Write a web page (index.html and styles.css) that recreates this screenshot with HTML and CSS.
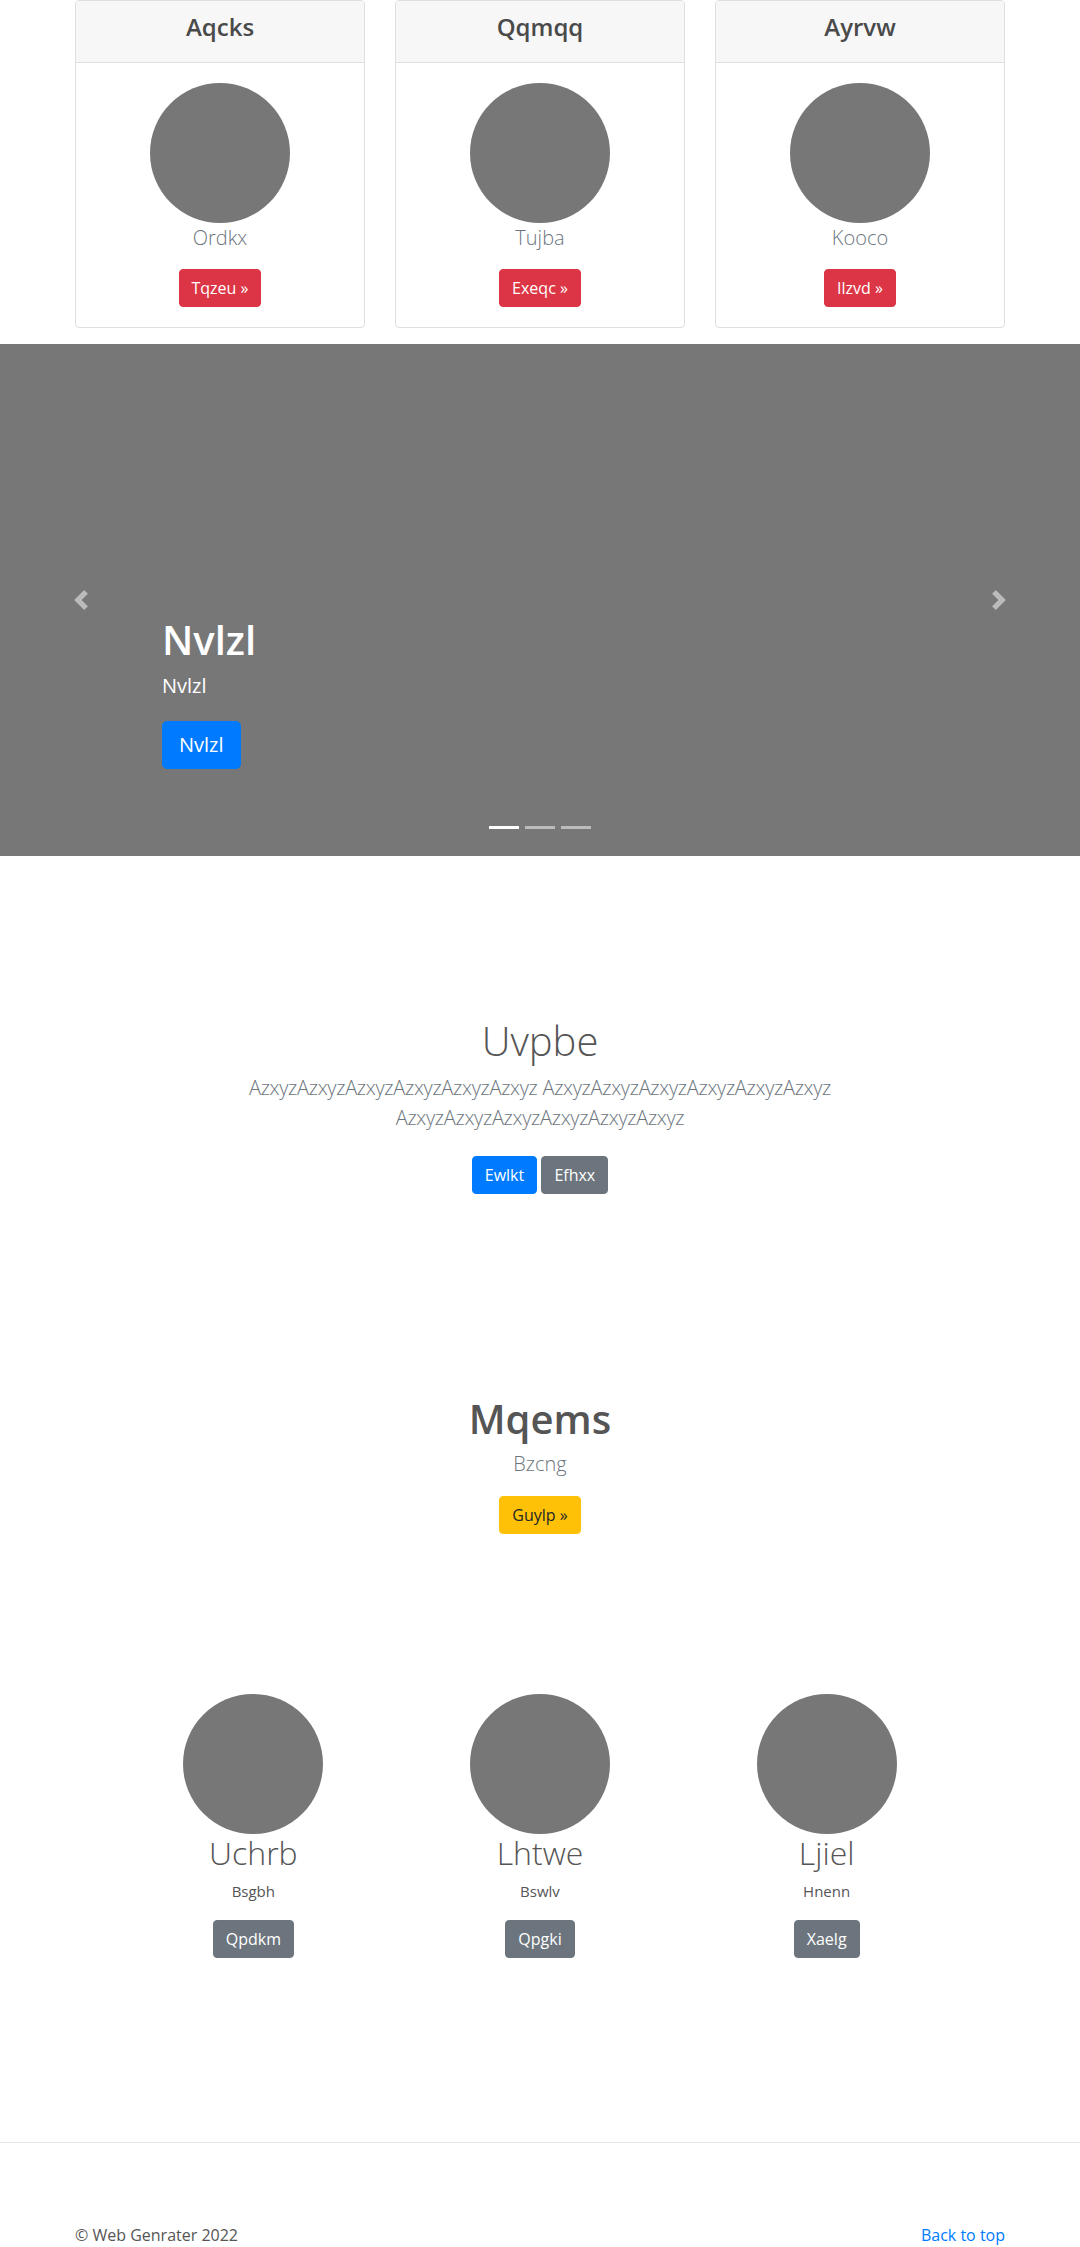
FILE: index.html
```html
<!DOCTYPE html>
<html lang="en">
<head>
<meta charset="utf-8">
<title>Web Genrater</title>
<link rel="stylesheet" href="styles.css">
</head>
<body>
<div class="cards">
  <div class="card">
    <div class="card-header"><h4>Aqcks</h4></div>
    <div class="card-body">
      <div class="circle"></div>
      <p class="card-text">Ordkx</p>
      <a class="btn btn-danger" href="#">Tqzeu &raquo;</a>
    </div>
  </div>
  <div class="card">
    <div class="card-header"><h4>Qqmqq</h4></div>
    <div class="card-body">
      <div class="circle"></div>
      <p class="card-text">Tujba</p>
      <a class="btn btn-danger" href="#">Exeqc &raquo;</a>
    </div>
  </div>
  <div class="card">
    <div class="card-header"><h4>Ayrvw</h4></div>
    <div class="card-body">
      <div class="circle"></div>
      <p class="card-text">Kooco</p>
      <a class="btn btn-danger" href="#">Ilzvd &raquo;</a>
    </div>
  </div>
</div>

<div class="carousel">
  <div class="caption">
    <h1>Nvlzl</h1>
    <p>Nvlzl</p>
    <p class="caption-btn"><a class="btn btn-lg btn-primary" href="#">Nvlzl</a></p>
  </div>
  <a class="control control-prev" href="#" aria-label="Previous">
    <svg width="20" height="20" viewBox="0 0 8 8"><path d="M5.25 0l-4 4 4 4 1.5-1.5-2.5-2.5 2.5-2.5-1.5-1.5z"/></svg>
  </a>
  <a class="control control-next" href="#" aria-label="Next">
    <svg width="20" height="20" viewBox="0 0 8 8"><path d="M2.75 0l-1.5 1.5 2.5 2.5-2.5 2.5 1.5 1.5 4-4-4-4z"/></svg>
  </a>
  <ol class="indicators">
    <li class="active"></li>
    <li></li>
    <li></li>
  </ol>
</div>

<section class="hero">
  <h1 class="hero-title">Uvpbe</h1>
  <p class="lead">AzxyzAzxyzAzxyzAzxyzAzxyzAzxyz AzxyzAzxyzAzxyzAzxyzAzxyzAzxyz AzxyzAzxyzAzxyzAzxyzAzxyzAzxyz</p>
  <p class="hero-btns"><a class="btn btn-primary" href="#">Ewlkt</a> <a class="btn btn-secondary" href="#">Efhxx</a></p>
</section>

<section class="feature">
  <h1 class="feature-title">Mqems</h1>
  <p class="feature-sub">Bzcng</p>
  <a class="btn btn-warning" href="#">Guylp &raquo;</a>
</section>

<section class="marketing">
  <div class="col">
    <div class="circle"></div>
    <h2>Uchrb</h2>
    <p>Bsgbh</p>
    <a class="btn btn-secondary" href="#">Qpdkm</a>
  </div>
  <div class="col">
    <div class="circle"></div>
    <h2>Lhtwe</h2>
    <p>Bswlv</p>
    <a class="btn btn-secondary" href="#">Qpgki</a>
  </div>
  <div class="col">
    <div class="circle"></div>
    <h2>Ljiel</h2>
    <p>Hnenn</p>
    <a class="btn btn-secondary" href="#">Xaelg</a>
  </div>
</section>

<footer class="footer">
  <div class="footer-inner">
    <p>&copy; Web Genrater 2022</p>
    <p><a href="#">Back to top</a></p>
  </div>
</footer>
</body>
</html>
```

FILE: styles.css
```css
* { box-sizing: border-box; }

html, body {
  margin: 0;
  padding: 0;
}

body {
  font-family: "Open Sans", "Noto Sans", "Liberation Sans", sans-serif;
  font-size: 16px;
  line-height: 1.5;
  color: #555;
  background: #fff;
}

a { color: #007bff; text-decoration: none; }

p { margin: 0; }
h1, h2, h4 { margin: 0; }

.btn {
  display: inline-block;
  font-size: 16px;
  line-height: 24px;
  padding: 6px 12px;
  border: 1px solid transparent;
  border-radius: 4px;
  color: #fff;
  text-align: center;
  vertical-align: middle;
}
.btn-lg {
  font-size: 20px;
  line-height: 30px;
  padding: 8px 16px;
  border-radius: 5px;
}
.btn-danger { background: #dc3545; border-color: #dc3545; }
.btn-primary { background: #007bff; border-color: #007bff; }
.btn-secondary { background: #6c757d; border-color: #6c757d; }
.btn-warning { background: #ffc107; border-color: #ffc107; color: #212529; }

.circle {
  width: 140px;
  height: 140px;
  border-radius: 50%;
  background: #777;
  margin: 0 auto;
}

/* Cards */
.cards {
  width: 930px;
  margin: 0 auto;
  display: grid;
  grid-template-columns: repeat(3, 1fr);
  column-gap: 30px;
}
.card {
  border: 1px solid #dfdfdf;
  border-radius: 4px;
  text-align: center;
  overflow: hidden;
}
.card-header {
  background: #f7f7f7;
  border-bottom: 1px solid #dfdfdf;
  padding: 12px 20px;
}
.card-header h4 {
  font-size: 24px;
  line-height: 28.8px;
  font-weight: 600;
  margin-bottom: 8px;
  color: #4a4a4a;
}
.card-body {
  padding: 20px;
}
.card-text {
  font-size: 20px;
  line-height: 30px;
  font-weight: 300;
  color: #6c757d;
  margin-bottom: 16px;
}

/* Carousel */
.carousel {
  position: relative;
  margin-top: 16px;
  height: 512px;
  background: #777;
  display: flex;
  flex-direction: column;
  justify-content: flex-end;
  padding: 0 15% 48px;
}
.caption {
  padding: 20px 0;
  color: #fff;
  text-align: left;
}
.caption h1 {
  font-size: 40px;
  line-height: 48px;
  font-weight: 600;
  margin-bottom: 8px;
}
.caption p {
  font-size: 20px;
  line-height: 28px;
  margin-bottom: 20px;
}
.caption .caption-btn { line-height: 48px; height: 48px; }
.control {
  position: absolute;
  top: 0;
  bottom: 0;
  width: 15%;
  display: flex;
  align-items: center;
  justify-content: center;
}
.control svg { fill: rgba(255, 255, 255, 0.5); display: block; }
.control-prev { left: 0; }
.control-next { right: 0; }
.indicators {
  position: absolute;
  left: 0;
  right: 0;
  bottom: 27px;
  margin: 0;
  padding: 0;
  list-style: none;
  display: flex;
  justify-content: center;
  gap: 6px;
}
.indicators li {
  width: 30px;
  height: 3px;
  background: rgba(255, 255, 255, 0.5);
}
.indicators li.active { background: #fff; }

/* Hero */
.hero {
  padding-top: 161px;
  text-align: center;
}
.hero-title {
  font-size: 40px;
  line-height: 48px;
  font-weight: 300;
  margin-bottom: 8px;
}
.lead {
  max-width: 700px;
  margin: 0 auto 23px;
  font-size: 20px;
  line-height: 30px;
  font-weight: 300;
  color: #6c757d;
  letter-spacing: -0.3px;
}
.hero-btns {
  height: 38px;
}

/* Feature */
.feature {
  padding-top: 201px;
  text-align: center;
}
.feature-title {
  font-size: 40px;
  line-height: 48px;
  font-weight: 600;
  margin-bottom: 6px;
}
.feature-sub {
  font-size: 20px;
  line-height: 30px;
  font-weight: 300;
  color: #6c757d;
  margin-bottom: 17px;
}

/* Marketing */
.marketing {
  width: 860px;
  margin: 0 auto;
  padding-top: 160px;
  display: grid;
  grid-template-columns: repeat(3, 1fr);
  text-align: center;
}
.marketing h2 {
  font-size: 32px;
  line-height: 38.4px;
  font-weight: 300;
  margin-bottom: 8px;
}
.marketing p {
  font-size: 15px;
  line-height: 22.5px;
  margin-bottom: 17px;
}

/* Footer */
.footer {
  margin-top: 184px;
  border-top: 1px solid #e5e5e5;
  padding-top: 80px;
}
.footer-inner {
  width: 930px;
  margin: 0 auto;
  display: flex;
  justify-content: space-between;
}
.footer-inner p { margin-bottom: 16px; }
```
